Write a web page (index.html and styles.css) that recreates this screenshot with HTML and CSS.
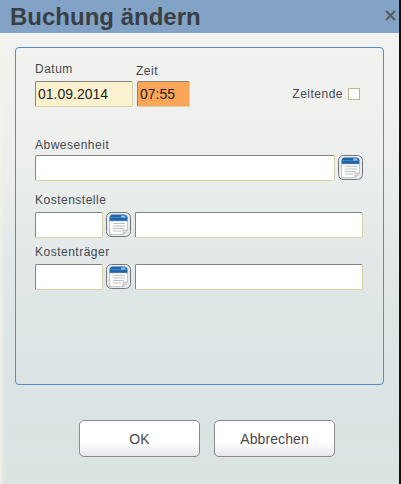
FILE: index.html
```html
<!DOCTYPE html>
<html lang="de">
<head>
    <meta charset="UTF-8">
    <meta name="viewport" content="width=device-width, initial-scale=1.0">
    <title>Buchung ändern</title>
    <link rel="stylesheet" href="styles.css">
</head>
<body>
    <svg class="icon-defs" width="0" height="0">
        <symbol id="list-icon" viewBox="0 0 25 25">
            <rect x="0.5" y="0.5" width="24" height="24" rx="5" fill="#e9ecef" stroke="#74767a"/>
            <path d="M3.5 6 Q3.5 2.5 7 2.5 H18 Q21.5 2.5 21.5 6 V9 H3.5 Z" fill="#1f64a6"/>
            <path d="M3.5 5.5 H21.5" stroke="#3f86c4" stroke-width="1"/>
            <rect x="15" y="3.5" width="4.5" height="2" fill="#9cc0dc"/>
            <path d="M3.5 9 H21.5 V18 L17 22.5 H3.5 Z" fill="#fbfcfc" stroke="#a8abae" stroke-width="0.6"/>
            <path d="M7 11.5 H19 M7 14 H19 M7 16.5 H18 M7 19 H15" stroke="#b0b4b8" stroke-width="0.8"/>
            <path d="M17 22.5 V18 H21.5 Z" fill="#dfe2e5" stroke="#a8abae" stroke-width="0.6"/>
        </symbol>
    </svg>

    <div class="dialog">
        <div class="titlebar">
            <h1>Buchung ändern</h1>
            <svg class="close" width="11" height="11" viewBox="0 0 11 11">
                <path d="M1 1 L10 10 M10 1 L1 10" stroke="#585d63" stroke-width="2.2"/>
            </svg>
        </div>

        <div class="panel">
            <div class="time-row">
                <div class="field">
                    <label>Datum</label>
                    <input class="input date" type="text" value="01.09.2014">
                </div>
                <div class="field">
                    <label class="zeit-label">Zeit</label>
                    <input class="input time" type="text" value="07:55">
                </div>
                <div class="zeitende">
                    <span>Zeitende</span>
                    <span class="checkbox"></span>
                </div>
            </div>

            <label class="row-label first">Abwesenheit</label>
            <div class="input-row">
                <input class="input wide" type="text">
                <button class="pick"><svg width="25" height="25"><use href="#list-icon"/></svg></button>
            </div>

            <label class="row-label second">Kostenstelle</label>
            <div class="input-row">
                <input class="input code" type="text">
                <button class="pick"><svg width="25" height="25"><use href="#list-icon"/></svg></button>
                <input class="input name" type="text">
            </div>

            <label class="row-label">Kostenträger</label>
            <div class="input-row">
                <input class="input code" type="text">
                <button class="pick"><svg width="25" height="25"><use href="#list-icon"/></svg></button>
                <input class="input name" type="text">
            </div>
        </div>

        <div class="actions">
            <button class="btn">OK</button>
            <button class="btn">Abbrechen</button>
        </div>
    </div>
</body>
</html>
```

FILE: styles.css
```css
* {
    box-sizing: border-box;
}

body {
    margin: 0;
    font-family: "Liberation Sans", Arial, sans-serif;
    font-size: 12px;
    letter-spacing: 0.5px;
    color: #44484e;
    background: #fff;
}

.icon-defs {
    position: absolute;
}

.dialog {
    width: 401px;
    height: 484px;
    border-right: 2px solid #111;
    background: linear-gradient(#f3f3f0 0, #f0f1ef 110px, #e8edeb 200px, #dfe6e6 300px, #dbe3e5 400px, #d9e4df 484px);
    box-shadow: inset 3px 0 3px -1px #f2f3e8;
}

.titlebar {
    height: 33px;
    background: #82a3c6;
    display: flex;
    align-items: center;
    justify-content: space-between;
    padding: 0 3px 0 10px;
}

.titlebar h1 {
    margin: 0;
    font-size: 24px;
    line-height: 33px;
    font-weight: bold;
    letter-spacing: 0;
    color: #3a3f44;
}

.close {
    margin-top: -2px;
}

.panel {
    width: 369px;
    height: 338px;
    margin: 14px 0 0 15px;
    padding: 13px 19px 0;
    border: 1px solid #5b8ac4;
    border-radius: 4px;
}

.time-row {
    display: flex;
    align-items: flex-end;
    gap: 4px;
}

.field {
    display: flex;
    flex-direction: column;
}

.field label {
    line-height: 16px;
    margin-bottom: 4px;
}

.field .zeit-label {
    margin-bottom: 2px;
    margin-left: -1px;
}

.input {
    display: block;
    height: 26px;
    padding: 0 2px;
    border: 1px solid #d4d4a8;
    border-top-color: #85857a;
    border-left-color: #85857a;
    border-radius: 2px;
    background: #fff;
    font-family: inherit;
    font-size: 14px;
    letter-spacing: 0;
    color: #222;
}

.date {
    width: 98px;
    background: #fdf2cf;
}

.time {
    width: 53px;
    background: #fba559;
}

.zeitende {
    display: flex;
    align-items: center;
    gap: 5px;
    margin-left: auto;
    margin-right: 4px;
    height: 26px;
}

.checkbox {
    width: 12px;
    height: 12px;
    border: 1px solid #b8b88c;
    background: #fff;
}

.row-label {
    display: block;
    line-height: 16px;
    margin-top: 6px;
    margin-bottom: 4px;
}

.row-label.first {
    margin-top: 30px;
    margin-bottom: 2px;
}

.row-label.second {
    margin-top: 11px;
}

.input-row {
    display: flex;
    align-items: flex-start;
}

.wide {
    width: 300px;
}

.code {
    width: 68px;
}

.name {
    width: 228px;
    margin-left: 4px;
}

.pick {
    width: 25px;
    height: 25px;
    margin-left: 3px;
    padding: 0;
    border: none;
    background: none;
    display: block;
}

.actions {
    display: flex;
    gap: 14px;
    margin: 35px 0 0 79px;
}

.btn {
    width: 121px;
    height: 37px;
    border: 1px solid #8a8a8a;
    border-radius: 5px;
    background: linear-gradient(#fff 0, #fff 60%, #e8e8ec 100%);
    font-family: inherit;
    font-size: 14px;
    letter-spacing: 0.1px;
    color: #48484a;
}
```
